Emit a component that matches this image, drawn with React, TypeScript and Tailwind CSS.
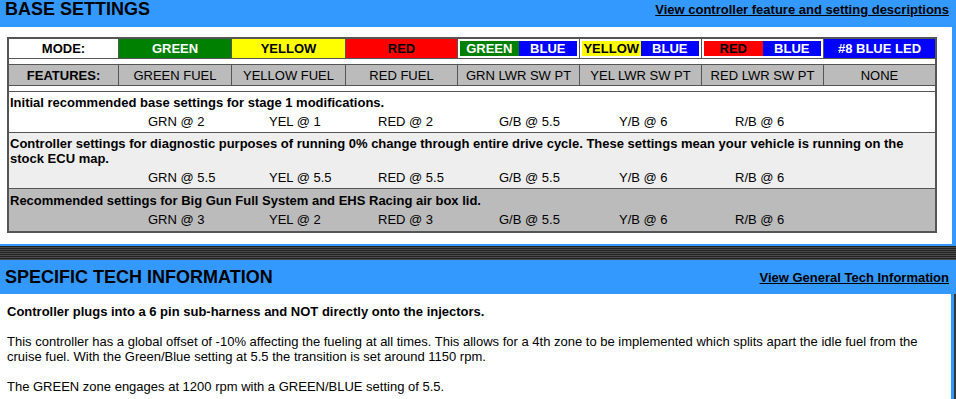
const modeCols = "grid grid-cols-[110px_113px_114px_112px_122px_122px_122px_111px]";

function Split({ left, leftClass }: { left: string; leftClass: string }) {
  return (
    <div className="flex border-r border-[#555] bg-white p-[2px]">
      <div className={leftClass}>{left}</div>
      <div className="flex flex-1 items-center justify-center bg-[#0000ff] text-white">BLUE</div>
    </div>
  );
}

function Values({ v }: { v: string[] }) {
  return (
    <div className="mt-[4px] grid grid-cols-[121px_109px_121px_120px_116px_1fr] pl-[138px] font-normal">
      {v.map((x) => (
        <span key={x}>{x}</span>
      ))}
    </div>
  );
}

function SectionHeader({ title, link, top }: { title: string; link: string; top?: boolean }) {
  return (
    <div
      className={
        top
          ? "flex h-[27px] items-center justify-between pb-[9px] pl-[5px] pr-[7px]"
          : "flex h-[34px] items-center justify-between pl-[5px] pr-[7px]"
      }
    >
      <h2 className="text-[18px] font-bold text-black">{title}</h2>
      <a href="#" className="text-[13px] font-bold text-black underline">
        {link}
      </a>
    </div>
  );
}

export default function App() {
  const cell = "flex items-center justify-center border-r border-[#555]";
  return (
    <div className="min-h-[399px] bg-[#3399ff] font-['Liberation_Sans',Arial,sans-serif] text-[13px] leading-[15px] text-black">
      <SectionHeader top title="BASE SETTINGS" link="View controller feature and setting descriptions" />

      <div className="mr-[4px] bg-white pb-[11px] pl-[7px] pr-[15px] pt-[10px]">
        <div className="border-2 border-[#555]">
          {/* mode colours */}
          <div className={`${modeCols} h-[20px] border-b border-[#555] font-bold`}>
            <div className={`${cell} bg-white`}>MODE:</div>
            <div className={`${cell} bg-[#008000] text-white`}>GREEN</div>
            <div className={`${cell} bg-[#ffff00]`}>YELLOW</div>
            <div className={`${cell} bg-[#ff0000]`}>RED</div>
            <Split left="GREEN" leftClass="flex flex-1 items-center justify-center bg-[#008000] text-white" />
            <Split left="YELLOW" leftClass="flex flex-1 items-center justify-center bg-[#ffff00]" />
            <Split left="RED" leftClass="flex flex-1 items-center justify-center bg-[#ff0000]" />
            <div className="flex items-center justify-center bg-[#0000ff] text-white">#8 BLUE LED</div>
          </div>
          <div className="h-[6px] border-b border-[#555] bg-white" />

          {/* features */}
          <div className={`${modeCols} h-[21px] border-b border-[#555] bg-[#bbbbbb]`}>
            <div className={`${cell} font-bold`}>FEATURES:</div>
            <div className={cell}>GREEN FUEL</div>
            <div className={cell}>YELLOW FUEL</div>
            <div className={cell}>RED FUEL</div>
            <div className={cell}>GRN LWR SW PT</div>
            <div className={cell}>YEL LWR SW PT</div>
            <div className={cell}>RED LWR SW PT</div>
            <div className="flex items-center justify-center">NONE</div>
          </div>
          <div className="h-[6px] border-b border-[#555] bg-white" />

          <div className="border-b border-[#555] bg-white py-[3px] pl-[1px] font-bold">
            <p>Initial recommended base settings for stage 1 modifications.</p>
            <Values v={["GRN @ 2", "YEL @ 1", "RED @ 2", "G/B @ 5.5", "Y/B @ 6", "R/B @ 6"]} />
          </div>
          <div className="border-b border-[#555] bg-[#eeeeee] py-[3px] pl-[1px] font-bold">
            <p>
              Controller settings for diagnostic purposes of running 0% change through entire drive cycle. These
              settings mean your vehicle is running on the
              <br />
              stock ECU map.
            </p>
            <Values v={["GRN @ 5.5", "YEL @ 5.5", "RED @ 5.5", "G/B @ 5.5", "Y/B @ 6", "R/B @ 6"]} />
          </div>
          <div className="bg-[#bbbbbb] pb-[4px] pl-[1px] pt-[4px] font-bold">
            <p>Recommended settings for Big Gun Full System and EHS Racing air box lid.</p>
            <Values v={["GRN @ 3", "YEL @ 2", "RED @ 3", "G/B @ 5.5", "Y/B @ 6", "R/B @ 6"]} />
          </div>
        </div>
      </div>

      <div className="mt-[2px] h-[14px] bg-[repeating-linear-gradient(180deg,#222222_0px,#222222_1px,#4a4a4a_1px,#4a4a4a_2px)]" />

      <SectionHeader title="SPECIFIC TECH INFORMATION" link="View General Tech Information" />

      <div className="border-r-2 border-[#333]">
        <div className="mr-[3px] bg-white px-[7px] pb-[10px] pt-[10px]">
          <p className="mb-[15px] font-bold">Controller plugs into a 6 pin sub-harness and NOT directly onto the injectors.</p>
          <p className="mb-[15px]">
            This controller has a global offset of -10% affecting the fueling at all times. This allows for a 4th zone
            to be implemented which splits apart the idle fuel from the
            <br />
            cruise fuel. With the Green/Blue setting at 5.5 the transition is set around 1150 rpm.
          </p>
          <p>The GREEN zone engages at 1200 rpm with a GREEN/BLUE setting of 5.5.</p>
        </div>
      </div>
    </div>
  );
}
